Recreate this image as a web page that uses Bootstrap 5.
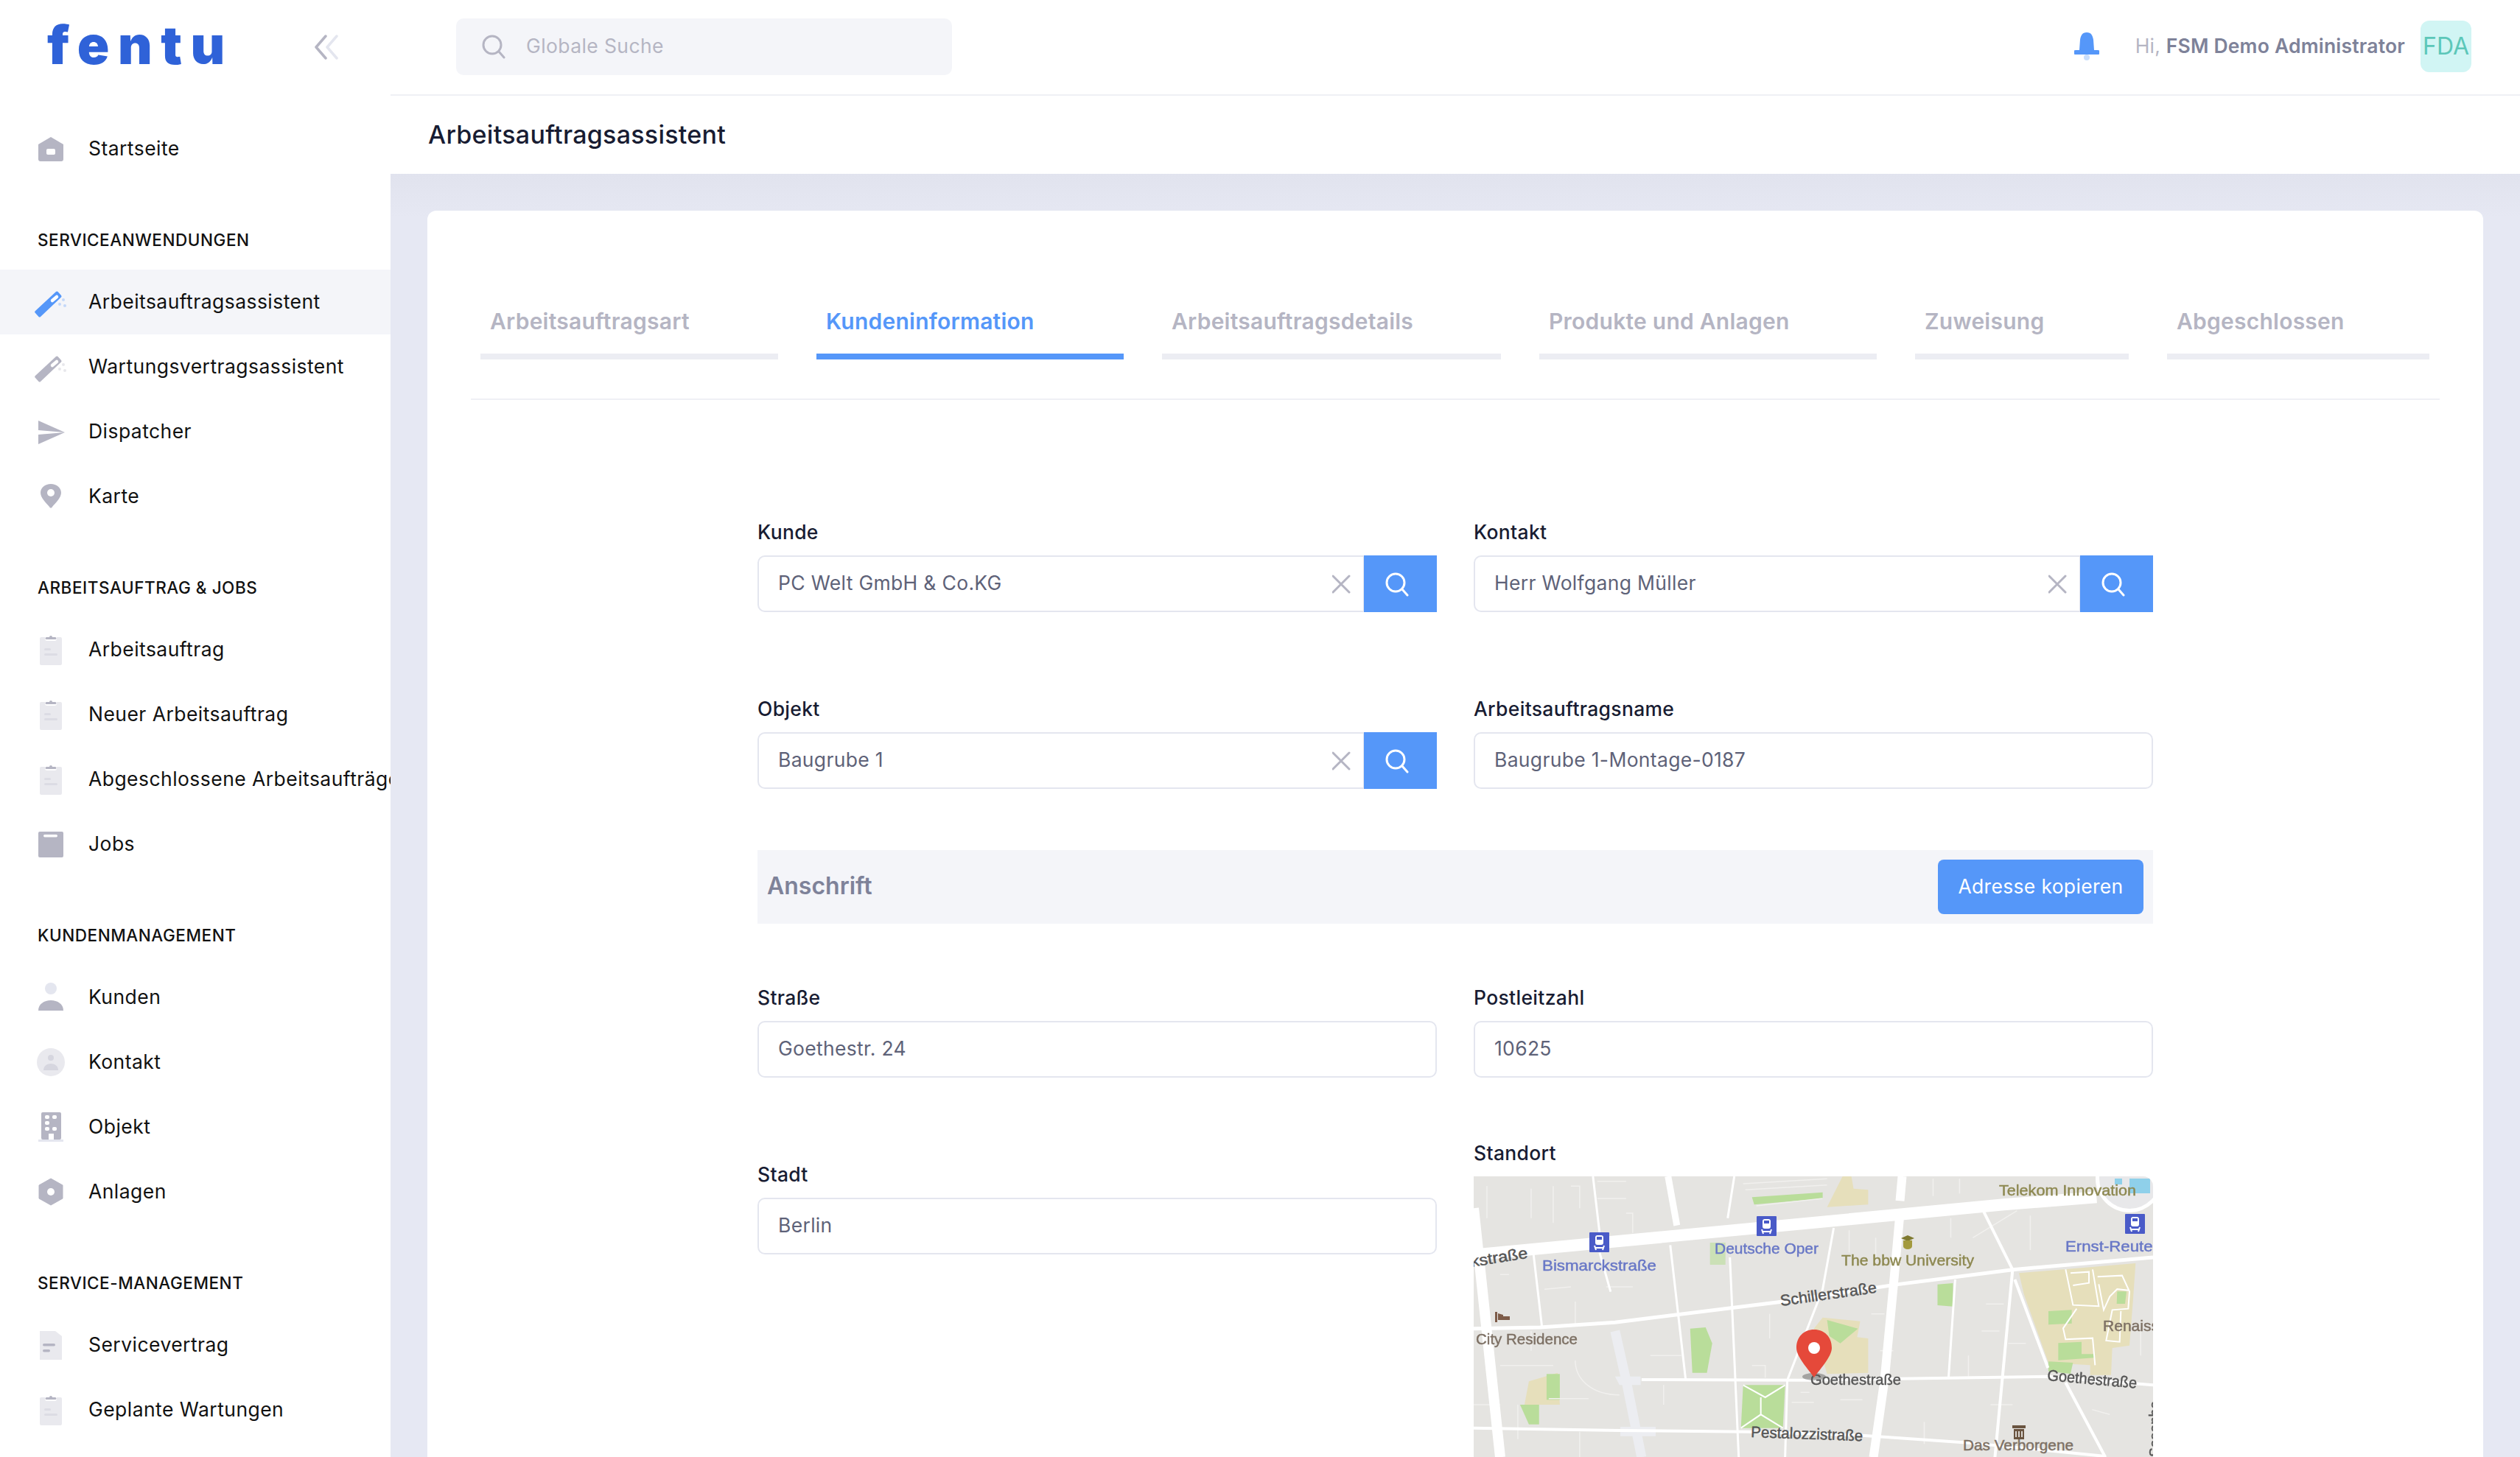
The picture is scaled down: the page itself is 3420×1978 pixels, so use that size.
<!DOCTYPE html>
<html lang="de">
<head>
<meta charset="UTF-8">
<title>Arbeitsauftragsassistent</title>
<link href="https://cdn.jsdelivr.net/npm/bootstrap@5.3.3/dist/css/bootstrap.min.css" rel="stylesheet">
<style>
html, body { height: 100%; overflow: hidden; }
body { font-family: Inter, "Liberation Sans", sans-serif; background: #e6e8f3; color: #181c32; }
.app-shell { height: 1978px; }

/* sidebar */
.side-panel { width: 530px; flex: none; background: #fff; overflow: hidden; }
.side-top { height: 128px; padding: 0 70px 0 64px; }
.brand { font-size: 72px; line-height: 1; font-weight: 900; color: #2f62d8; letter-spacing: 11.5px; position: relative; top: -3px; }
.brand-dots { position: absolute; left: 21px; top: 37px; }
.side-list { list-style: none; margin: 0; padding: 0; }
.side-item { height: 88px; padding-left: 47px; display: flex; align-items: center; font-size: 26.5px; color: #111; white-space: nowrap; letter-spacing: .45px; }
.side-item.is-active { background: #f4f5f9; }
.side-icon { width: 44px; height: 44px; margin-right: 29px; flex: none; color: #b5b5c3; }
.is-active .side-icon { color: #5597f9; }
.side-head { font-size: 22.5px; font-weight: 500; color: #111; letter-spacing: .024em; padding-left: 51px; line-height: 36px; }
.side-first { margin-top: 30px; }
.head-a { margin-top: 62px; margin-bottom: 22px; }

/* header */
.main-col { min-width: 0; }
.top-bar { height: 130px; background: #fff; border-bottom: 2px solid #eff0f5; padding: 0 66px 2px 89px; }
.global-search { width: 673px; height: 77px; background: #f4f5f9; border-radius: 10px; padding-left: 34px; color: #b5b5c3; }
.global-search input { background: transparent; border: 0; outline: 0; font-size: 26.5px; margin-left: 27px; width: 500px; padding: 0; font-family: inherit; letter-spacing: .4px; }
.global-search input::placeholder { color: #b5b5c3; }
.bell { margin-right: 49px; }
.hi-text { font-size: 26.5px; color: #b5b5c3; letter-spacing: .2px; }
.hi-text strong { color: #7e8299; font-weight: 600; }
.user-tile { width: 69px; height: 70px; border-radius: 12px; background: #d1f5f4; color: #5cc7b9; font-size: 32px; margin-left: 21px; }
.title-bar { height: 106px; background: #fff; padding-left: 51px; }
.title-bar h1 { font-size: 34px; font-weight: 500; margin: 0; letter-spacing: .008em; }

/* card and tabs */
.page-area { background: linear-gradient(#e1e3ee, #e6e8f3 60px); padding: 50px 50px 0; flex: 1; min-height: 0; }
.wizard-card { background: #fff; border: 0; border-radius: 12px; padding: 0 59px; height: 1800px; }
.step-row { padding: 128px 13px 53px; gap: 52px; border-bottom: 2px solid #eff0f5; flex-wrap: nowrap; }
.step-tab { border-bottom: 8px solid #ecedf3; padding: 0 0 22px 13px; font-size: 30px; font-weight: 600; line-height: 44px; color: #b5b5c3; white-space: nowrap; letter-spacing: .008em; }
.step-tab.is-current { color: #5597f9; border-color: #5597f9; }
.step-a { width: 404px; } .step-b { width: 417px; } .step-c { width: 460px; }
.step-d { width: 458px; } .step-e { width: 290px; } .step-f { width: 356px; }

/* form */
.form-wrap { width: 1894px; margin: 161px auto 0; }
.form-wrap .row { --bs-gutter-x: 50px; --bs-gutter-y: 0; }
.field-label { display: block; font-size: 26.5px; font-weight: 500; line-height: 36px; margin-bottom: 14px; letter-spacing: .012em; }
.form-wrap .form-control { height: 77px; border: 2px solid #e4e6ef; border-radius: 10px; font-size: 26.5px; color: #5e6278; padding: 0 26px 3px; letter-spacing: .012em; box-shadow: none; }
.form-wrap .input-group .form-control { border-right: 0; }
.clear-box { background: #fff; border: 2px solid #e4e6ef; border-left: 0; padding: 0 17px 0 0; }
.find-btn { width: 99px; height: 77px; background: #5597f9; border: 0; border-radius: 0 !important; padding: 0 10px 0 0; }
.row-gap { margin-top: 113px; }
.addr-bar { height: 100px; background: #f4f5f9; margin: 83px 0 82px; padding: 0 13px; }
.addr-bar h2 { font-size: 32px; font-weight: 600; color: #7e8299; margin: 0 0 2px; }
.copy-btn { width: 279px; height: 74px; background: #5597f9; border: 0; border-radius: 8px; color: #fff; font-size: 26.5px; letter-spacing: .012em; padding: 0; }
.last-row { margin-top: 84px; }
.city-col { padding-top: 29px; }

/* map */
.map-box { display: block; width: 922px; height: 460px; background: #e5e4e1; border-top-right-radius: 14px; filter: blur(.6px); }
.map-box text { font-family: "Liberation Sans Narrow", "Liberation Sans", sans-serif; font-size: 21px; stroke-width: .45; }
.t-blue { fill: #6877c6; stroke: #6877c6; } .t-olive { fill: #8d8850; stroke: #8d8850; }
.t-grey { fill: #555; stroke: #555; } .t-brown { fill: #7d7064; stroke: #7d7064; }
.rd { fill: none; stroke: #fff; vector-effect: non-scaling-stroke; stroke-linecap: butt; }
.w3 { stroke-width: 3; } .w4 { stroke-width: 4; } .w5 { stroke-width: 5; } .w9 { stroke-width: 9; }
.w12 { stroke-width: 12; } .w14 { stroke-width: 14; } .w16 { stroke-width: 16; }
.rd-pale { stroke: #ecedf1; stroke-width: 13; }
.rd-thin { fill: none; stroke: #f1f0ee; stroke-width: 1.5; vector-effect: non-scaling-stroke; }
.rd-park { fill: none; stroke: #fff; stroke-width: 2; vector-effect: non-scaling-stroke; }
.hidden-defs { display: none; }
</style>
</head>
<body>
<svg class="hidden-defs" xmlns="http://www.w3.org/2000/svg">
  <symbol id="i-home" viewBox="0 0 44 44"><path d="M5 16 22 6l17 10v20a3 3 0 0 1-3 3H8a3 3 0 0 1-3-3z" fill="#b5b5c3"/><rect x="16" y="22" width="12" height="8" rx="2" fill="#fff"/></symbol>
  <symbol id="i-wand" viewBox="0 0 44 44"><path d="M1 34 29 8a2 2 0 0 1 2.500 0L36 13a2 2 0 0 1 0 2.500L8 42a2 2 0 0 1-2.500 0L1 37a2 2 0 0 1 0-3z" fill="currentColor"/><path d="M24 20l6-5" stroke="#fff" stroke-width="4.500" stroke-linecap="round"/><g fill="currentColor" opacity=".3"><circle cx="39" cy="19" r="2"/><circle cx="34" cy="25" r="2"/><circle cx="41" cy="27" r="2"/></g></symbol>
  <symbol id="i-send" viewBox="0 0 44 44"><path d="M5 7 41 23 5 20z" fill="#b5b5c3"/><path d="M5 26 41 23 5 39z" fill="#b5b5c3"/></symbol>
  <symbol id="i-pin" viewBox="0 0 44 44"><path d="M22 5c8 0 14 5 14 12 0 7-8 14-12 19-1 2-3 2-4 0C16 31 8 24 8 17 8 10 14 5 22 5z" fill="#b5b5c3"/><circle cx="22" cy="17" r="5" fill="#fff"/></symbol>
  <symbol id="i-clip" viewBox="0 0 44 44"><rect x="7" y="5" width="30" height="38" rx="2" fill="#e9e9ee"/><rect x="14" y="1" width="16" height="9" rx="3" fill="#fff"/><path d="M16 5h4a2 2 0 0 1 4 0h4a1 1 0 0 1 0 3H16a1 1 0 0 1 0-3z" fill="#b5b5c3"/><rect x="13" y="20" width="9" height="3" rx="1.5" fill="#dcdce4"/><rect x="13" y="27" width="18" height="3" rx="1.5" fill="#dcdce4"/></symbol>
  <symbol id="i-jobs" viewBox="0 0 44 44"><rect x="5" y="5" width="34" height="35" rx="2" fill="#b5b5c3"/><rect x="12" y="9" width="19" height="3.5" rx="1.7" fill="#fff"/></symbol>
  <symbol id="i-user" viewBox="0 0 44 44"><circle cx="22" cy="10" r="8" fill="#e4e6ef"/><path d="M5 40c0-9 8-14 17-14s17 5 17 14z" fill="#b5b5c3"/></symbol>
  <symbol id="i-contact" viewBox="0 0 44 44"><circle cx="22" cy="22" r="19" fill="#e9e9ee"/><circle cx="22" cy="16" r="4" fill="#d6d6df"/><path d="M12 33c0-6 5-9 10-9s10 3 10 9z" fill="#d6d6df"/></symbol>
  <symbol id="i-build" viewBox="0 0 44 44"><rect x="9" y="2" width="27" height="37" rx="2" fill="#b5b5c3"/><g fill="#fff"><rect x="14" y="6" width="6" height="5" rx="2"/><rect x="24" y="6" width="6" height="5" rx="2"/><rect x="14" y="14" width="6" height="5" rx="2"/><rect x="14" y="22" width="6" height="5" rx="2"/><rect x="24" y="22" width="6" height="5" rx="2"/><rect x="19" y="31" width="7" height="8"/></g><rect x="5" y="39" width="34" height="3" fill="#e4e6ef"/></symbol>
  <symbol id="i-hex" viewBox="0 0 44 44"><path d="M22 4 38 13v18L22 40 6 31V13z" fill="#b5b5c3" stroke="#b5b5c3" stroke-width="1" stroke-linejoin="round"/><circle cx="22" cy="22" r="5" fill="#fff"/></symbol>
  <symbol id="i-doc" viewBox="0 0 44 44"><path d="M7 3h21l9 7v32H7z" fill="#e9e9ee"/><rect x="11" y="20" width="17" height="3.5" rx="1.7" fill="#b5b5c3"/><rect x="11" y="28" width="10" height="3.5" rx="1.7" fill="#b5b5c3"/></symbol>
  <symbol id="i-find" viewBox="0 0 34 34"><circle cx="15" cy="15" r="12" fill="none" stroke="currentColor" stroke-width="3"/><path d="m24 24 7 8" stroke="currentColor" stroke-width="3" stroke-linecap="round"/></symbol>
  <symbol id="i-x" viewBox="0 0 26 26"><path d="M2 2l22 22M24 2 2 24" stroke="#b5b5c3" stroke-width="3" stroke-linecap="round"/></symbol>
</svg>

<div class="app-shell d-flex">
  <aside class="side-panel">
    <div class="side-top d-flex align-items-center justify-content-between">
      <span class="brand">fentu<svg class="brand-dots" width="12" height="24" viewBox="0 0 12 24"><g fill="#fff" opacity=".75"><rect x="1" y="1" width="3" height="2"/><rect x="6" y="2" width="3" height="2"/><rect x="3" y="6" width="3" height="2"/><rect x="8" y="7" width="3" height="2"/><rect x="1" y="11" width="3" height="2"/><rect x="6" y="12" width="3" height="2"/><rect x="3" y="16" width="3" height="2"/><rect x="8" y="17" width="3" height="2"/><rect x="1" y="21" width="3" height="2"/><rect x="6" y="21" width="3" height="2"/></g></svg></span>
      <svg width="34" height="34" viewBox="0 0 34 34"><path d="M16 2 3 17l13 15" fill="none" stroke="#b5b5c3" stroke-width="3.5" stroke-linecap="round" stroke-linejoin="round"/><path d="M31 2 18 17l13 15" fill="none" stroke="#e4e6ef" stroke-width="3.5" stroke-linecap="round" stroke-linejoin="round"/></svg>
    </div>
    <ul class="side-list side-first">
      <li class="side-item"><svg class="side-icon"><use href="#i-home"/></svg>Startseite</li>
    </ul>
    <div class="side-head head-a">SERVICEANWENDUNGEN</div>
    <ul class="side-list">
      <li class="side-item is-active"><svg class="side-icon"><use href="#i-wand"/></svg>Arbeitsauftragsassistent</li>
      <li class="side-item"><svg class="side-icon"><use href="#i-wand"/></svg>Wartungsvertragsassistent</li>
      <li class="side-item"><svg class="side-icon"><use href="#i-send"/></svg>Dispatcher</li>
      <li class="side-item"><svg class="side-icon"><use href="#i-pin"/></svg>Karte</li>
    </ul>
    <div class="side-head head-a">ARBEITSAUFTRAG &amp; JOBS</div>
    <ul class="side-list">
      <li class="side-item"><svg class="side-icon"><use href="#i-clip"/></svg>Arbeitsauftrag</li>
      <li class="side-item"><svg class="side-icon"><use href="#i-clip"/></svg>Neuer Arbeitsauftrag</li>
      <li class="side-item"><svg class="side-icon"><use href="#i-clip"/></svg>Abgeschlossene Arbeitsaufträge</li>
      <li class="side-item"><svg class="side-icon"><use href="#i-jobs"/></svg>Jobs</li>
    </ul>
    <div class="side-head head-a">KUNDENMANAGEMENT</div>
    <ul class="side-list">
      <li class="side-item"><svg class="side-icon"><use href="#i-user"/></svg>Kunden</li>
      <li class="side-item"><svg class="side-icon"><use href="#i-contact"/></svg>Kontakt</li>
      <li class="side-item"><svg class="side-icon"><use href="#i-build"/></svg>Objekt</li>
      <li class="side-item"><svg class="side-icon"><use href="#i-hex"/></svg>Anlagen</li>
    </ul>
    <div class="side-head head-a">SERVICE-MANAGEMENT</div>
    <ul class="side-list">
      <li class="side-item"><svg class="side-icon"><use href="#i-doc"/></svg>Servicevertrag</li>
      <li class="side-item"><svg class="side-icon"><use href="#i-clip"/></svg>Geplante Wartungen</li>
    </ul>
  </aside>

  <div class="main-col flex-grow-1 d-flex flex-column">
    <header class="top-bar d-flex align-items-center justify-content-between">
      <div class="global-search d-flex align-items-center">
        <svg width="34" height="34"><use href="#i-find"/></svg>
        <input type="text" placeholder="Globale Suche">
      </div>
      <div class="d-flex align-items-center">
        <svg class="bell" width="34" height="38" viewBox="0 0 34 38"><path d="M17 0c6 0 8 4 9 10l1 14h5a2 2 0 0 1 0 6H2a2 2 0 0 1 0-6h5l1-14C9 4 11 0 17 0z" fill="#5597f9"/><ellipse cx="17" cy="34" rx="4" ry="4" fill="#c9defc"/></svg>
        <span class="hi-text">Hi, <strong>FSM Demo Administrator</strong></span>
        <span class="user-tile d-flex align-items-center justify-content-center">FDA</span>
      </div>
    </header>
    <div class="title-bar d-flex align-items-center"><h1>Arbeitsauftragsassistent</h1></div>

    <main class="page-area">
      <section class="wizard-card card">
        <ul class="step-row nav">
          <li class="step-tab step-a">Arbeitsauftragsart</li>
          <li class="step-tab step-b is-current">Kundeninformation</li>
          <li class="step-tab step-c">Arbeitsauftragsdetails</li>
          <li class="step-tab step-d">Produkte und Anlagen</li>
          <li class="step-tab step-e">Zuweisung</li>
          <li class="step-tab step-f">Abgeschlossen</li>
        </ul>

        <form class="form-wrap">
          <div class="row">
            <div class="col-6">
              <label class="field-label">Kunde</label>
              <div class="input-group">
                <input class="form-control" value="PC Welt GmbH &amp; Co.KG">
                <span class="input-group-text clear-box"><svg width="26" height="26"><use href="#i-x"/></svg></span>
                <button type="button" class="btn find-btn text-white"><svg width="34" height="34"><use href="#i-find"/></svg></button>
              </div>
            </div>
            <div class="col-6">
              <label class="field-label">Kontakt</label>
              <div class="input-group">
                <input class="form-control" value="Herr Wolfgang Müller">
                <span class="input-group-text clear-box"><svg width="26" height="26"><use href="#i-x"/></svg></span>
                <button type="button" class="btn find-btn text-white"><svg width="34" height="34"><use href="#i-find"/></svg></button>
              </div>
            </div>
          </div>
          <div class="row row-gap">
            <div class="col-6">
              <label class="field-label">Objekt</label>
              <div class="input-group">
                <input class="form-control" value="Baugrube 1">
                <span class="input-group-text clear-box"><svg width="26" height="26"><use href="#i-x"/></svg></span>
                <button type="button" class="btn find-btn text-white"><svg width="34" height="34"><use href="#i-find"/></svg></button>
              </div>
            </div>
            <div class="col-6">
              <label class="field-label">Arbeitsauftragsname</label>
              <input class="form-control" value="Baugrube 1-Montage-0187">
            </div>
          </div>

          <div class="addr-bar d-flex align-items-center justify-content-between">
            <h2>Anschrift</h2>
            <button type="button" class="btn copy-btn">Adresse kopieren</button>
          </div>

          <div class="row">
            <div class="col-6">
              <label class="field-label">Straße</label>
              <input class="form-control" value="Goethestr. 24">
            </div>
            <div class="col-6">
              <label class="field-label">Postleitzahl</label>
              <input class="form-control" value="10625">
            </div>
          </div>
          <div class="row last-row">
            <div class="col-6 city-col">
              <label class="field-label">Stadt</label>
              <input class="form-control" value="Berlin">
            </div>
            <div class="col-6">
              <label class="field-label">Standort</label>
              <svg class="map-box" viewBox="0 0 922 460">
                <g transform="scale(.5995 .3333) translate(0 -170)">
                  <!-- land use -->
                  <path d="M790 745 875 760 868 825 893 830 893 970 800 975 770 790z" fill="#e6dfbb"/>
                  <path d="M125 1005 190 970 195 1100 115 1100z" fill="#e6dfbb"/>
                  <path d="M835 170H855L860 220 893 225 893 285 800 295z" fill="#e6dfbb"/>
                  <g fill="#b9dd9a">
                    <path d="M800 755 870 790 830 850 805 820z"/>
                    <path d="M1050 610 1085 605V700L1050 695z"/>
                    <path d="M490 790 525 785 540 850 528 970H495z"/>
                    <path d="M610 1020H705L700 1195H605z"/>
                    <path d="M105 1100H148V1180H125z"/><path d="M165 975H195V1080H165z"/>
                    <path d="M630 255 790 235V260L635 285z"/><path d="M535 440H570V530H535z" opacity=".6"/>
                  </g>
                  <!-- small streets -->
                  <path class="rd-thin" d="M130 220V340M180 210V360M220 210H240V300M280 190H345M280 260H345M345 320H360V400M30 210V340M640 290 790 260M610 200 800 180M615 225 800 205M1040 180V250M1100 180V240M1230 310 1130 420M1260 330V470M1080 340V420M850 390V480M910 420V520M230 680V770M130 800V880M60 570H80M160 630 220 620M300 620H360M670 730V830M900 730H930M1160 690H1200M1150 800H1190M1120 900V990M430 1020V1100M630 940H660V990M720 1090H770M1170 1100H1220M1400 1120 1440 1140M1020 1170V1260M240 1210V1314M170 1075H260M400 900H470M920 880H950M1210 850H1250M100 1100 100 1240M0 1100H60M1510 770V900M1260 1280H1330M830 1080H880M740 1050H760M60 940 180 940M230 920C230 1000 270 1060 330 1060"/>
                  <path class="rd-park" d="M610 1020 660 1070 705 1020M605 1195 650 1140 700 1195M650 1070V1140"/>
                  <!-- streets -->
                  <path class="rd rd-pale" d="M320 800 345 1000 380 1314"/>
                  <path d="M320 985H378V1020H330z M332 1190H412V1228H332z" fill="#ecedf1"/>
                  <path class="rd w3" d="M135 480 155 790M445 450 480 1000M580 500 600 1314M270 170 285 400M285 480 310 640M590 170 575 340M1090 590 1075 990"/>
                  <path class="rd w3" d="M815 380 790 630 710 1000 705 1314"/>
                  <path class="rd w14" d="M0 300 60 1314"/>
                  <path class="rd w9" d="M440 170 460 370"/>
                  <path class="rd w12" d="M970 170 965 270M965 320 950 620 930 1000 905 1314"/>
                  <path class="rd w4" d="M1155 315 1220 550 1180 1314"/>
                </g>
                <!-- campus block and roundabout -->
                <circle cx="890" cy="3" r="46" fill="#fff"/><circle cx="890" cy="3" r="41" fill="#e8e8ea"/>
                <path d="M870 3h10v8h-10zM890 3h28v20h-28z" fill="#8fd0ea"/>
                <g transform="translate(780 -7) scale(.3333)">
                  <path d="M-120 415 355 375 345 520 330 710 260 720 255 830 170 830 170 790 0 780-100 500z" fill="#e6dfbb"/>
                  <g fill="#b9dd9a"><path d="M0 570 95 565V620L0 625z"/><path d="M40 700 135 695V745H190L185 760 40 770z"/><path d="M0 775 100 780 90 825 0 815z"/><path d="M280 490H318L312 540H278z"/></g>
                  <path class="rd-park" d="M70 400 100 545 205 550 180 400M90 415 165 410V455L100 465M200 430 300 425 330 490 325 560 260 565 235 690 290 695 295 570M115 560 60 640 70 685 180 680 190 790M205 460 225 565 250 510 280 480 325 485"/>
                </g>
                <g transform="scale(.5995 .3333) translate(0 -170)">
                  <path class="rd w4" d="M1225 590 1300 950M1340 1010 1430 1314"/>
                  <path class="rd w5" d="M0 790 150 785 320 765 700 680 960 610 1220 550 1538 500"/>
                  <path class="rd w4" d="M380 998 760 1000 1300 985 1538 1020"/>
                  <path class="rd w4" d="M0 1195 330 1205 620 1210 880 1225 1120 1255 1430 1310"/>
                  <path class="rd w16" d="M0 490 1200 285 1410 255"/>
                </g>
                <!-- labels -->
                <text class="t-grey" transform="translate(-3 123) rotate(-9)" textLength="78" lengthAdjust="spacingAndGlyphs">kstraße</text>
                <text class="t-blue" x="93" y="128" textLength="155" lengthAdjust="spacingAndGlyphs">Bismarckstraße</text>
                <text class="t-blue" x="327" y="105" textLength="141" lengthAdjust="spacingAndGlyphs">Deutsche Oper</text>
                <text class="t-olive" x="713" y="26" textLength="186" lengthAdjust="spacingAndGlyphs">Telekom Innovation</text>
                <text class="t-olive" x="499" y="121" textLength="180" lengthAdjust="spacingAndGlyphs">The bbw University</text>
                <text class="t-blue" x="803" y="102" textLength="126" lengthAdjust="spacingAndGlyphs">Ernst-Reuter</text>
                <text class="t-grey" transform="translate(417 176) rotate(-8)" textLength="132" lengthAdjust="spacingAndGlyphs">Schillerstraße</text>
                <text class="t-brown" x="3" y="228" textLength="138" lengthAdjust="spacingAndGlyphs">City Residence</text>
                <text class="t-brown" x="854" y="210" textLength="76" lengthAdjust="spacingAndGlyphs">Renaiss</text>
                <text class="t-grey" x="457" y="283" textLength="123" lengthAdjust="spacingAndGlyphs">Goethestraße</text>
                <text class="t-grey" transform="translate(778 277) rotate(5)" textLength="122" lengthAdjust="spacingAndGlyphs">Goethestraße</text>
                <text class="t-grey" transform="translate(376 354) rotate(2)" textLength="152" lengthAdjust="spacingAndGlyphs">Pestalozzistraße</text>
                <text class="t-brown" x="664" y="372" textLength="150" lengthAdjust="spacingAndGlyphs">Das Verborgene</text>
                <text class="t-grey" transform="translate(931 381) rotate(-90)" textLength="76" lengthAdjust="spacingAndGlyphs">Sesenhe</text>
                <!-- stations -->
                <g id="tram"><rect x="157" y="76" width="27" height="27" fill="#4a5bc8" rx="1"/><rect x="165" y="80" width="11" height="13" rx="3" fill="#fff"/><rect x="167" y="82" width="7" height="4" fill="#4a5bc8"/><path d="M165 97h11M164 94l2 6M177 94l-2 6" fill="none" stroke="#fff" stroke-width="2"/></g>
                <use href="#tram" x="227" y="-22"/>
                <use href="#tram" x="727" y="-25"/>
                <path d="M580 84l9-4 9 4-9 4z" fill="#7f7a30"/><path d="M583 87h12v8a6 4 0 0 1-12 0z" fill="#a39a3e"/>
                <path d="M29 184h3v14h-3zM33 190h16v5H33zM33 186l7 2v2h-7z" fill="#7d5b48"/>
                <path d="M731 338h18v4h-18zM733 343h14v14h-14z" fill="#6a5440"/><path d="M736 346v8M740 346v8M744 346v8" stroke="#fff" stroke-width="1.5"/>
                <!-- pin -->
                <ellipse cx="462" cy="272" rx="16" ry="5" fill="#555" opacity=".45"/>
                <path d="M462 208c14 0 24 10 24 25 0 12-17 30-24 40-7-10-24-28-24-40 0-15 10-25 24-25z" fill="#e5493a"/>
                <ellipse cx="462" cy="233" rx="8" ry="8" fill="#fff"/>
              </svg>
            </div>
          </div>
        </form>
      </section>
    </main>
  </div>
</div>
<script src="https://cdn.jsdelivr.net/npm/bootstrap@5.3.3/dist/js/bootstrap.bundle.min.js"></script>
</body>
</html>
